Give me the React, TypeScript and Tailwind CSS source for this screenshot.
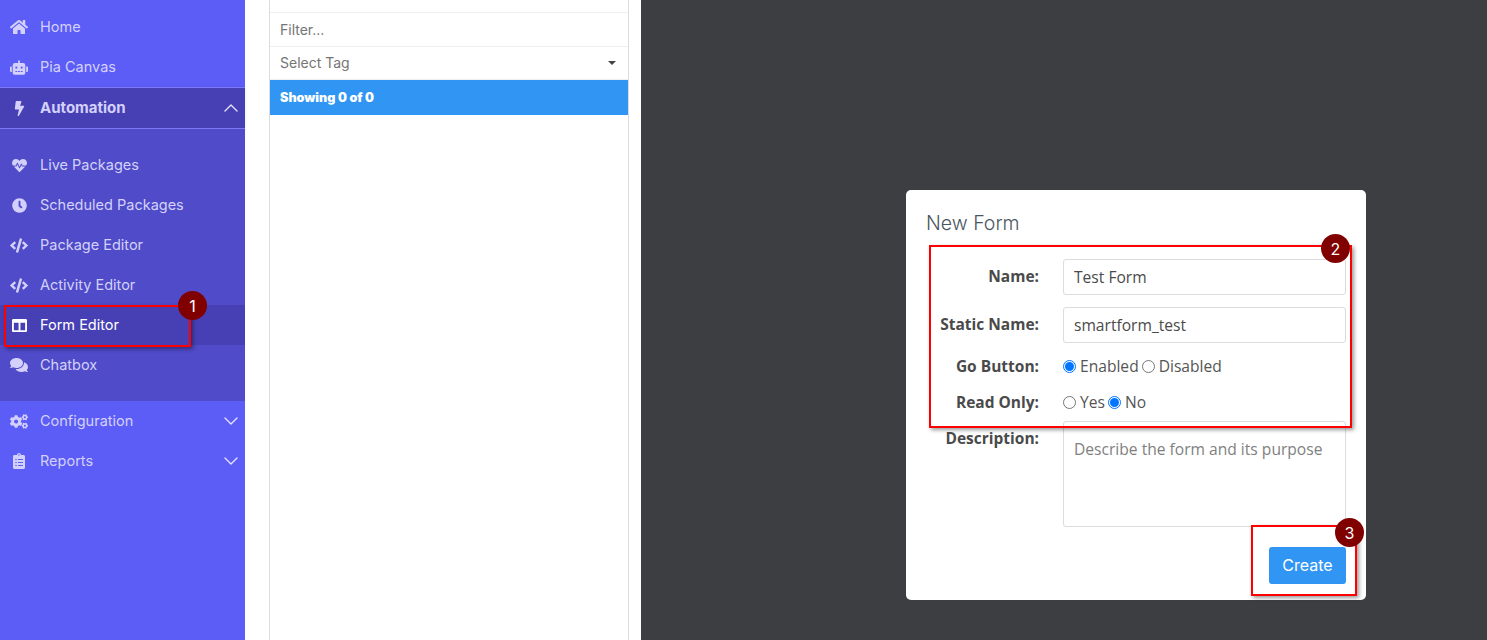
import React from 'react';
import { FaHome, FaRobot, FaBolt, FaHeartbeat, FaClock, FaCode, FaColumns, FaComments, FaCogs, FaClipboardList } from 'react-icons/fa';
import { ChevronUp, ChevronDown } from 'lucide-react';

const sans = "font-['Inter','Open_Sans',sans-serif]";
const formFont = "font-['Open_Sans',sans-serif]";

function NavItem({ icon, label, chevron, active }: { icon: React.ReactNode; label: string; chevron?: boolean; active?: boolean }) {
  return (
    <div className={`h-10 flex items-center pl-[10px] pr-[2px] text-[14.5px] leading-[20px] ${active ? 'bg-[#4740b5] text-white' : 'text-[#d3d1fb]'}`}>
      <span className="w-[18px] mr-[12px] flex justify-center shrink-0">{icon}</span>
      <span className="flex-1">{label}</span>
      {chevron && <ChevronDown size={24} strokeWidth={1.4} className="text-[#e4e3fd]" />}
    </div>
  );
}

function Radio({ checked, label }: { checked?: boolean; label: string }) {
  return (
    <span className="inline-flex items-center">
      <span className={`w-[13px] h-[13px] rounded-full border bg-white flex items-center justify-center ${checked ? 'border-[#0075ff]' : 'border-[#767676]'}`}>
        {checked && <span className="w-[9px] h-[9px] rounded-full bg-[#0075ff]" />}
      </span>
      <span className="ml-[4px] mr-[3px]">{label}</span>
    </span>
  );
}

function Label({ children }: { children: React.ReactNode }) {
  return <div className="w-[113px] text-right font-bold text-[15.5px] text-[#4a4a4a] shrink-0">{children}</div>;
}

function Marker({ n, className }: { n: number; className: string }) {
  return (
    <div className={`absolute w-[29px] h-[29px] rounded-full bg-[#800000] text-white text-[16px] flex items-center justify-center ${className}`}>{n}</div>
  );
}

export default function App() {
  return (
    <div className={`relative w-[1487px] h-[640px] overflow-hidden flex bg-white ${sans}`}>
      {/* Sidebar */}
      <aside className="w-[245px] shrink-0 bg-[#5c5cf6] pt-[7px]">
        <NavItem icon={<FaHome size={18} />} label="Home" />
        <NavItem icon={<FaRobot size={19} />} label="Pia Canvas" />
        <div className="h-[42px] flex items-center pl-[10px] pr-[2px] bg-[#4740b5] border-y border-[#7d78f5] text-[15px] leading-[20px] font-bold text-[#d3d1fb] shadow-sm">
          <span className="w-[18px] mr-[12px] flex justify-center shrink-0"><FaBolt size={15} /></span>
          <span className="flex-1">Automation</span>
          <ChevronUp size={24} strokeWidth={1.4} className="text-[#e4e3fd]" />
        </div>
        <div className="bg-[#4f4bc9] py-4">
          <NavItem icon={<FaHeartbeat size={15} />} label="Live Packages" />
          <NavItem icon={<FaClock size={15} />} label="Scheduled Packages" />
          <NavItem icon={<FaCode size={19} />} label="Package Editor" />
          <NavItem icon={<FaCode size={19} />} label="Activity Editor" />
          <NavItem icon={<FaColumns size={15} />} label="Form Editor" active />
          <NavItem icon={<FaComments size={18} />} label="Chatbox" />
        </div>
        <NavItem icon={<FaCogs size={19} />} label="Configuration" chevron />
        <NavItem icon={<FaClipboardList size={16} />} label="Reports" chevron />
      </aside>

      {/* List column */}
      <div className="w-[396px] shrink-0 pl-[24px] pr-[12px]">
        <div className="w-[360px] h-[640px] border-x border-[#dcdcdc] pt-3 text-[14px] text-[#757575]">
          <div className="h-[35px] border-y border-[#eeeeee] flex items-center px-[10px]">Filter...</div>
          <div className="h-[33px] border-b border-[#eeeeee] flex items-center justify-between pl-[10px] pr-[12px]">
            <span className="pb-[2px]">Select Tag</span>
            <span className="w-0 h-0 border-x-[4px] border-x-transparent border-t-[4px] border-t-[#444444]" />
          </div>
          <div className="h-[35px] bg-[#3196f3] text-white text-[12.6px] leading-[18px] font-black flex items-center px-[10px]">Showing 0 of 0</div>
        </div>
      </div>

      {/* Dark panel */}
      <div className="flex-1 bg-[#3d3e42] pt-[190px] pl-[265px]">
        <div className={`w-[460px] h-[410px] bg-white rounded-[5px] pt-[20px] px-[20px] text-[15.6px] ${formFont}`}>
          <h2 className={`text-[19.5px] leading-[26px] font-light text-[#4a5560] mb-[23px] ${sans}`}>New Form</h2>
          <div className="flex items-center h-[36px] mb-[12px]">
            <Label>Name:</Label>
            <input readOnly value="Test Form" className="w-[283px] h-[36px] ml-[24px] border border-[#dcdcdc] rounded-[3px] px-[10px] text-[#4a4a4a] outline-none" />
          </div>
          <div className="flex items-center h-[36px] mb-[6px]">
            <Label>Static Name:</Label>
            <input readOnly value="smartform_test" className="w-[283px] h-[36px] ml-[24px] border border-[#dcdcdc] rounded-[3px] px-[10px] text-[#4a4a4a] outline-none" />
          </div>
          <div className="flex items-center h-[36px] text-[#555555]">
            <Label>Go Button:</Label>
            <div className="ml-[24px] flex"><Radio checked label="Enabled" /><Radio label="Disabled" /></div>
          </div>
          <div className="flex items-center h-[36px] text-[#555555]">
            <Label>Read Only:</Label>
            <div className="ml-[24px] flex"><Radio label="Yes" /><Radio checked label="No" /></div>
          </div>
          <div className="flex items-start">
            <div className="pt-[6px]"><Label>Description:</Label></div>
            <textarea readOnly placeholder="Describe the form and its purpose" className="block ml-[24px] w-[283px] h-[106px] border border-[#dcdcdc] rounded-[3px] px-[10px] pt-[16px] text-[15.6px] placeholder:text-[#808080] outline-none resize-none" />
          </div>
          <div className="flex justify-end mt-[20px]">
            <button className={`w-[77px] h-[37px] pb-[2px] bg-[#3196f3] text-white text-[16px] rounded-[3px] ${sans}`}>Create</button>
          </div>
        </div>
      </div>

      {/* Annotations */}
      <div className="absolute left-[4px] top-[305px] w-[187px] h-[42px] border-2 border-[#ff0000] shadow-[2px_2px_4px_rgba(0,0,0,0.4)]" />
      <Marker n={1} className="left-[178px] top-[291px]" />
      <div className="absolute left-[929px] top-[245px] w-[423px] h-[183px] border-2 border-[#ff0000] shadow-[2px_2px_4px_rgba(0,0,0,0.4)]" />
      <Marker n={2} className="left-[1321px] top-[234px]" />
      <div className="absolute left-[1251px] top-[525px] w-[106px] h-[71px] border-2 border-[#ff0000] shadow-[2px_2px_4px_rgba(0,0,0,0.4)]" />
      <Marker n={3} className="left-[1335px] top-[518px]" />
    </div>
  );
}
